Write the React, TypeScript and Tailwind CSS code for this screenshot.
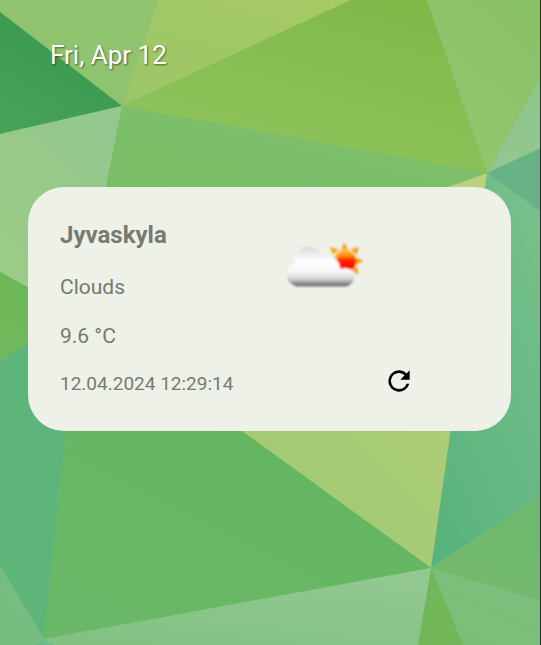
import React from "react";

type Facet = { points: string; from: string; to: string };

const facets: Facet[] = [
  { points: "0,0 158,0 122,106 0,12", from: "#90c46f", to: "#8fc36f" },
  { points: "158,0 351,0 122,106", from: "#a5c965", to: "#9cc668" },
  { points: "351,0 427,0 487,173 122,106", from: "#7fb948", to: "#92c45f" },
  { points: "427,0 541,0 541,77 487,173", from: "#8ac268", to: "#94c570" },
  { points: "541,77 541,148 487,173", from: "#8fc68c", to: "#92c890" },
  { points: "541,148 541,212 487,173", from: "#66b284", to: "#69b289" },
  { points: "487,173 541,212 541,495 431,568", from: "#76c08b", to: "#59b37d" },
  { points: "487,173 431,568 242,431 242,260", from: "#b9d27d", to: "#9fc873" },
  { points: "122,106 487,173 242,260 90,270", from: "#7ebf6d", to: "#77bc62" },
  { points: "0,12 122,106 0,134", from: "#38964f", to: "#46a257" },
  { points: "0,134 122,106 80,316 0,272", from: "#93c78e", to: "#9dcb85" },
  { points: "0,272 80,316 0,361", from: "#6ab653", to: "#70b95d" },
  { points: "0,361 78,312 44,639 0,566", from: "#5db57e", to: "#5eb579" },
  { points: "78,312 242,431 431,568 44,639", from: "#60b55e", to: "#6ab867" },
  { points: "431,568 541,495 541,601", from: "#6db970", to: "#75ba6c" },
  { points: "431,568 541,601 541,645 463,645", from: "#7dbe7c", to: "#7abf79" },
  { points: "431,568 463,645 418,645", from: "#71b75e", to: "#71b656" },
  { points: "44,639 431,568 418,645 54,645", from: "#93c892", to: "#83c183" },
  { points: "0,566 44,639 36,645 0,645", from: "#78be82", to: "#74bc80" },
  { points: "44,639 54,645 36,645", from: "#7cc18e", to: "#63b68a" },
];

function Wallpaper() {
  return (
    <svg
      aria-hidden="true"
      className="absolute inset-0 -z-10 h-full w-full"
      viewBox="0 0 540 645"
      preserveAspectRatio="none"
    >
      <defs>
        {facets.map((f, i) => (
          <linearGradient key={i} id={`facet-${i}`} x1="0.8" y1="0" x2="0.2" y2="1">
            <stop offset="0" stopColor={f.from} />
            <stop offset="1" stopColor={f.to} />
          </linearGradient>
        ))}
      </defs>
      <rect width="541" height="645" fill="#78bd6c" />
      {facets.map((f, i) => (
        <polygon key={i} points={f.points} fill={`url(#facet-${i})`} />
      ))}
    </svg>
  );
}

function PartlyCloudyIcon() {
  return (
    <svg role="img" aria-label="Partly cloudy" viewBox="0 0 80 48" className="h-12 w-20">
      <defs>
        <linearGradient id="cloud" x1="0" y1="5" x2="0" y2="46" gradientUnits="userSpaceOnUse">
          <stop offset="0" stopColor="#d3d3d5" />
          <stop offset="0.15" stopColor="#e8e8ea" />
          <stop offset="0.35" stopColor="#fcfcfd" />
          <stop offset="0.62" stopColor="#f7f7f8" />
          <stop offset="0.8" stopColor="#d6d6d8" />
          <stop offset="0.9" stopColor="#969697" />
          <stop offset="0.96" stopColor="#6b6b6b" />
          <stop offset="1" stopColor="#8b8b89" />
        </linearGradient>
        <linearGradient id="sun" x1="0" y1="9" x2="0" y2="28" gradientUnits="userSpaceOnUse">
          <stop offset="0" stopColor="#ffc04a" />
          <stop offset="0.3" stopColor="#ff8a10" />
          <stop offset="0.52" stopColor="#ff2a00" />
          <stop offset="1" stopColor="#ff0000" />
        </linearGradient>
        <filter id="soften" x="-5%" y="-5%" width="110%" height="110%">
          <feGaussianBlur stdDeviation="0.8" />
        </filter>
      </defs>
      <g filter="url(#soften)">
        <g fill="#fd9f1b">
          <path d="M59.500 1.500L63 8.500H56Z" />
          <path d="M45 6L53.500 8.500L48 14Z" />
          <path d="M74 6L71.500 14L65.500 8.500Z" />
          <path d="M79 20L71 23.500V16.500Z" />
          <path d="M73.500 34L66 29L72 25Z" />
        </g>
        <circle cx="60" cy="20" r="11" fill="#ffac31" />
        <circle cx="61.500" cy="20.500" r="9.500" fill="url(#sun)" />
        <path
          d="M12 45.500C6 44 1 39 1.500 33C2 28 6 25 9 23C9 12 15 6 24 6C31 6 36 10 38 16C42 14 47 15 50 18C53 20 55 23 55 28C61 26 68 28 70 33C70 39 67 44 61 45.500Z"
          fill="url(#cloud)"
        />
      </g>
    </svg>
  );
}

function RefreshIcon() {
  return (
    <svg aria-hidden="true" viewBox="0 0 24 24" className="size-8" fill="#000">
      <path d="M17.650 6.350A7.958 7.958 0 0 0 12 4a8 8 0 1 0 7.730 10h-2.080A5.990 5.990 0 0 1 12 18c-3.310 0-6-2.690-6-6s2.690-6 6-6c1.660 0 3.140.69 4.220 1.780L13 11h7V4l-2.350 2.350z" />
    </svg>
  );
}

export default function App() {
  return (
    <main className="relative isolate min-h-screen border-r border-[#26292f] pl-7 pr-[29px] pt-[35px] font-['Roboto',sans-serif]">
      <Wallpaper />
      <time
        dateTime="2024-04-12"
        className="block pl-[22px] text-[26px] leading-10 text-white [text-shadow:1px_1px_2px_rgba(0,0,0,0.5)]"
      >
        Fri, Apr 12
      </time>
      <section
        aria-label="Weather"
        className="mt-28 flex rounded-[36px] bg-[#eef1e8] px-8 pb-[31px] pt-8 text-[#767a70]"
      >
        <div className="w-[218px] shrink-0">
          <h1 className="text-2xl leading-8 font-bold">Jyvaskyla</h1>
          <p className="mt-5 text-[21px] leading-8">Clouds</p>
          <p className="mt-[17px] text-[21px] leading-8">9.6 °C</p>
          <p className="mt-4 text-[19px] leading-8">
            <time dateTime="2024-04-12T12:29:14">12.04.2024 12:29:14</time>
          </p>
        </div>
        <div className="flex grow flex-col items-start justify-between pb-[3px] pl-[7px] pt-[22px]">
          <PartlyCloudyIcon />
          <button type="button" aria-label="Refresh" className="ml-[98px] cursor-pointer">
            <RefreshIcon />
          </button>
        </div>
      </section>
    </main>
  );
}
